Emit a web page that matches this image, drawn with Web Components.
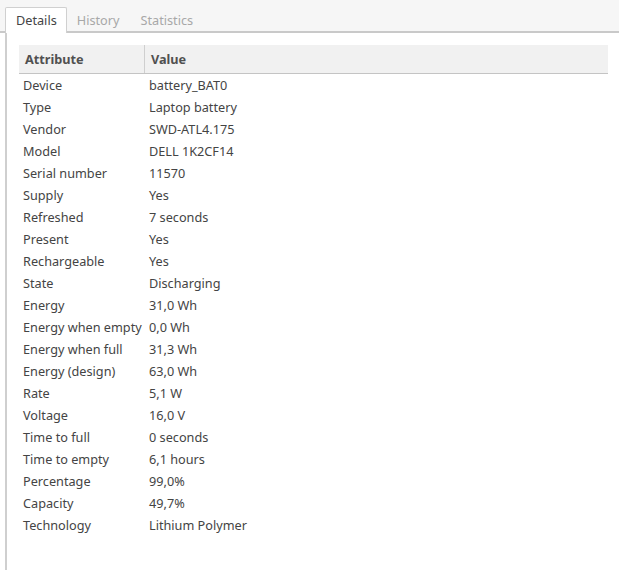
<!DOCTYPE html>
<html>
<head>
<meta charset="utf-8">
<style>
  html, body { margin: 0; height: 100%; background: #fff; }
  body { font: 12.7px "Noto Sans", sans-serif; color: #444; overflow: hidden; }
</style>
</head>
<body>
<device-panel></device-panel>
<script>
const ROWS = [
  ['Device', 'battery_BAT0'], ['Type', 'Laptop battery'], ['Vendor', 'SWD-ATL4.175'],
  ['Model', 'DELL 1K2CF14'], ['Serial number', '11570'], ['Supply', 'Yes'],
  ['Refreshed', '7 seconds'], ['Present', 'Yes'], ['Rechargeable', 'Yes'],
  ['State', 'Discharging'], ['Energy', '31,0 Wh'], ['Energy when empty', '0,0 Wh'],
  ['Energy when full', '31,3 Wh'], ['Energy (design)', '63,0 Wh'], ['Rate', '5,1 W'],
  ['Voltage', '16,0 V'], ['Time to full', '0 seconds'], ['Time to empty', '6,1 hours'],
  ['Percentage', '99,0%'], ['Capacity', '49,7%'], ['Technology', 'Lithium Polymer'],
];

class TabBar extends HTMLElement {
  constructor() {
    super();
    this.attachShadow({ mode: 'open' });
    const active = this.getAttribute('active');
    const tabs = this.getAttribute('tabs').split(',');
    this.shadowRoot.innerHTML = `
      <style>
        :host {
          display: flex;
          box-sizing: border-box;
          height: 33px;
          padding: 7px 0 0 5px;
          background: #f6f6f6;
          border-bottom: 2px solid #c9c9c9;
        }
        .tab {
          box-sizing: border-box;
          height: 26px;
          padding: 0 10px;
          margin-right: 1px;
          line-height: 27px;
          color: #a8a8a8;
        }
        .tab.active {
          height: 26px;
          padding-right: 9px;
          margin-right: 0;
          margin-bottom: -2px;
          line-height: 25px;
          background: #fff;
          color: #444;
          border: 1px solid #d0d0d0;
          border-bottom: 0;
          border-radius: 2px 2px 0 0;
        }
      </style>
      ${tabs.map(t => `<div class="tab ${t === active ? 'active' : ''}">${t}</div>`).join('')}
    `;
  }
}

class AttrTable extends HTMLElement {
  constructor() {
    super();
    this.attachShadow({ mode: 'open' });
    this.shadowRoot.innerHTML = `
      <style>
        :host { display: block; }
        .head, .row {
          display: grid;
          grid-template-columns: 125px 1fr;
        }
        .head {
          box-sizing: border-box;
          height: 29px;
          line-height: 28px;
          background: #f1f1f1;
          border-bottom: 1px solid #c4c4c4;
          font-weight: 700;
          color: #505050;
        }
        .head div { padding-left: 6px; }
        .head div + div { border-left: 1px solid #cfcfcf; }
        .row { height: 22px; line-height: 22px; }
        .row div { padding-left: 4px; white-space: nowrap; }
        .row div + div { padding-left: 5px; }
      </style>
      <div class="head"><div>Attribute</div><div>Value</div></div>
      ${ROWS.map(([k, v]) => `<div class="row"><div>${k}</div><div>${v}</div></div>`).join('')}
    `;
  }
}

class DevicePanel extends HTMLElement {
  constructor() {
    super();
    this.attachShadow({ mode: 'open' });
    this.shadowRoot.innerHTML = `
      <style>
        :host { display: flex; flex-direction: column; height: 570px; }
        .body {
          flex: 1;
          margin-left: 5px;
          border-left: 2px solid #cfcfcf;
          padding: 12px 11px 0 12px;
        }
      </style>
      <tab-bar tabs="Details,History,Statistics" active="Details"></tab-bar>
      <div class="body"><attr-table></attr-table></div>
    `;
  }
}

customElements.define('tab-bar', TabBar);
customElements.define('attr-table', AttrTable);
customElements.define('device-panel', DevicePanel);
</script>
</body>
</html>
